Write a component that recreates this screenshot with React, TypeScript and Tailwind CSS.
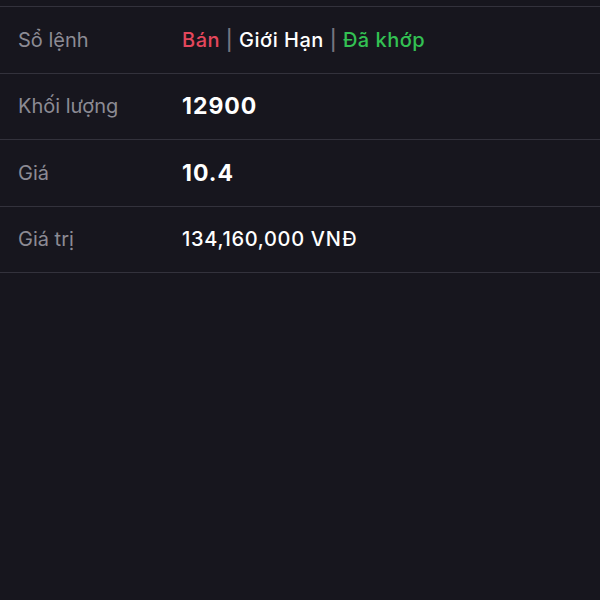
import React from "react";

const rows: { label: string; value: React.ReactNode }[] = [
  {
    label: "Sổ lệnh",
    value: (
      <span className="text-[20px] font-medium tracking-[0.5px]">
        <span className="text-[#e4475c]">Bán</span>
        <span className="text-[#76757f]"> | </span>
        <span className="text-white">Giới Hạn</span>
        <span className="text-[#76757f]"> | </span>
        <span className="text-[#33c153]">Đã khớp</span>
      </span>
    ),
  },
  { label: "Khối lượng", value: <span className="text-[23px] font-bold tracking-[1px] text-white">12900</span> },
  { label: "Giá", value: <span className="text-[23px] font-bold tracking-[1px] text-white">10.4</span> },
  { label: "Giá trị", value: <span className="text-[20px] font-medium tracking-[0.7px] text-white">134,160,000 VNĐ</span> },
];

export default function App() {
  return (
    <div
      className="w-[600px] h-[600px] bg-[#17161e] pt-[6px] overflow-hidden"
      style={{ fontFamily: "Inter, 'Noto Sans', sans-serif" }}
    >
      <div className="border-t-[1.5px] border-[#33323c]">
        {rows.map((r) => (
          <div
            key={r.label}
            className="flex items-center h-[66.5px] border-b-[1.5px] border-[#33323c]"
          >
            <div className="w-[182px] pl-[18px] text-[20px] text-[#8c8b94]">{r.label}</div>
            <div>{r.value}</div>
          </div>
        ))}
      </div>
    </div>
  );
}
